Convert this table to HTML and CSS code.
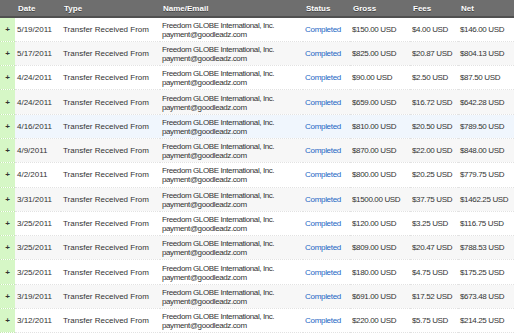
FILE: index.html
```html
<!DOCTYPE html>
<html lang="en">
<head>
  <meta charset="UTF-8" />
  <title>Transactions</title>
  <link rel="stylesheet" href="styles.css">
</head>
<body>
  <table class="history">
    <colgroup>
      <col class="c-toggle">
      <col class="c-date">
      <col class="c-type">
      <col class="c-name">
      <col class="c-status">
      <col class="c-gross">
      <col class="c-fees">
      <col class="c-net">
    </colgroup>
    <thead>
      <tr>
        <th class="toggle"></th>
        <th>Date</th>
        <th>Type</th>
        <th>Name/Email</th>
        <th>Status</th>
        <th>Gross</th>
        <th>Fees</th>
        <th>Net</th>
      </tr>
    </thead>
    <tbody>
      <tr>
        <td class="toggle">+</td><td>5/19/2011</td><td>Transfer Received From</td>
        <td class="name">Freedom GLOBE International, Inc.<br>payment@goodleadz.com</td>
        <td><a href="#">Completed</a></td><td class="amt">$150.00 USD</td><td class="amt">$4.00 USD</td><td class="amt">$146.00 USD</td>
      </tr>
      <tr class="alt">
        <td class="toggle">+</td><td>5/17/2011</td><td>Transfer Received From</td>
        <td class="name">Freedom GLOBE International, Inc.<br>payment@goodleadz.com</td>
        <td><a href="#">Completed</a></td><td class="amt">$825.00 USD</td><td class="amt">$20.87 USD</td><td class="amt">$804.13 USD</td>
      </tr>
      <tr>
        <td class="toggle">+</td><td>4/24/2011</td><td>Transfer Received From</td>
        <td class="name">Freedom GLOBE International, Inc.<br>payment@goodleadz.com</td>
        <td><a href="#">Completed</a></td><td class="amt">$90.00 USD</td><td class="amt">$2.50 USD</td><td class="amt">$87.50 USD</td>
      </tr>
      <tr class="alt">
        <td class="toggle">+</td><td>4/24/2011</td><td>Transfer Received From</td>
        <td class="name">Freedom GLOBE International, Inc.<br>payment@goodleadz.com</td>
        <td><a href="#">Completed</a></td><td class="amt">$659.00 USD</td><td class="amt">$16.72 USD</td><td class="amt">$642.28 USD</td>
      </tr>
      <tr class="hover">
        <td class="toggle">+</td><td>4/16/2011</td><td>Transfer Received From</td>
        <td class="name">Freedom GLOBE International, Inc.<br>payment@goodleadz.com</td>
        <td><a href="#">Completed</a></td><td class="amt">$810.00 USD</td><td class="amt">$20.50 USD</td><td class="amt">$789.50 USD</td>
      </tr>
      <tr class="alt">
        <td class="toggle">+</td><td>4/9/2011</td><td>Transfer Received From</td>
        <td class="name">Freedom GLOBE International, Inc.<br>payment@goodleadz.com</td>
        <td><a href="#">Completed</a></td><td class="amt">$870.00 USD</td><td class="amt">$22.00 USD</td><td class="amt">$848.00 USD</td>
      </tr>
      <tr>
        <td class="toggle">+</td><td>4/2/2011</td><td>Transfer Received From</td>
        <td class="name">Freedom GLOBE International, Inc.<br>payment@goodleadz.com</td>
        <td><a href="#">Completed</a></td><td class="amt">$800.00 USD</td><td class="amt">$20.25 USD</td><td class="amt">$779.75 USD</td>
      </tr>
      <tr class="alt">
        <td class="toggle">+</td><td>3/31/2011</td><td>Transfer Received From</td>
        <td class="name">Freedom GLOBE International, Inc.<br>payment@goodleadz.com</td>
        <td><a href="#">Completed</a></td><td class="amt">$1500.00 USD</td><td class="amt">$37.75 USD</td><td class="amt">$1462.25 USD</td>
      </tr>
      <tr>
        <td class="toggle">+</td><td>3/25/2011</td><td>Transfer Received From</td>
        <td class="name">Freedom GLOBE International, Inc.<br>payment@goodleadz.com</td>
        <td><a href="#">Completed</a></td><td class="amt">$120.00 USD</td><td class="amt">$3.25 USD</td><td class="amt">$116.75 USD</td>
      </tr>
      <tr class="alt">
        <td class="toggle">+</td><td>3/25/2011</td><td>Transfer Received From</td>
        <td class="name">Freedom GLOBE International, Inc.<br>payment@goodleadz.com</td>
        <td><a href="#">Completed</a></td><td class="amt">$809.00 USD</td><td class="amt">$20.47 USD</td><td class="amt">$788.53 USD</td>
      </tr>
      <tr>
        <td class="toggle">+</td><td>3/25/2011</td><td>Transfer Received From</td>
        <td class="name">Freedom GLOBE International, Inc.<br>payment@goodleadz.com</td>
        <td><a href="#">Completed</a></td><td class="amt">$180.00 USD</td><td class="amt">$4.75 USD</td><td class="amt">$175.25 USD</td>
      </tr>
      <tr class="alt">
        <td class="toggle">+</td><td>3/19/2011</td><td>Transfer Received From</td>
        <td class="name">Freedom GLOBE International, Inc.<br>payment@goodleadz.com</td>
        <td><a href="#">Completed</a></td><td class="amt">$691.00 USD</td><td class="amt">$17.52 USD</td><td class="amt">$673.48 USD</td>
      </tr>
      <tr>
        <td class="toggle">+</td><td>3/12/2011</td><td>Transfer Received From</td>
        <td class="name">Freedom GLOBE International, Inc.<br>payment@goodleadz.com</td>
        <td><a href="#">Completed</a></td><td class="amt">$220.00 USD</td><td class="amt">$5.75 USD</td><td class="amt">$214.25 USD</td>
      </tr>
    </tbody>
  </table>
</body>
</html>
```

FILE: styles.css
```css
* {
  box-sizing: border-box;
}
body {
  margin: 0;
  background: #fff;
  font-family: "Liberation Sans", Arial, sans-serif;
  font-size: 8px;
  color: #333;
  overflow: hidden;
}
.history {
  width: 514px;
  border-collapse: collapse;
  table-layout: fixed;
}
.c-toggle { width: 15px; }
.c-date { width: 46px; }
.c-type { width: 99px; }
.c-name { width: 143px; }
.c-status { width: 47px; }
.c-gross { width: 60px; }
.c-fees { width: 48px; }
.c-net { width: 56px; }

.history th {
  height: 17px;
  padding: 1px 0 0 3px;
  background: #6e6e6e;
  border-bottom: 2px solid #505050;
  color: #fff;
  font-weight: bold;
  text-align: left;
  text-shadow: 0 1px 0 #444;
}
.history td {
  height: 24.3px;
  padding: 0 0 0 2px;
  line-height: 9px;
  border-bottom: 1px dotted #e2e2e2;
  white-space: nowrap;
  overflow: hidden;
}
.history tr.alt td {
  background: #f7f7f7;
}
.history tr.hover td {
  background: #f0f6fd;
}
/* Зелёная колонка с плюсом */
.history .toggle,
.history tr td.toggle {
  padding: 0;
  text-align: center;
  background: #d6f7c6;
  border-bottom: 1px dotted #c4eab0;
  font-weight: bold;
  color: #333;
}
.history th.toggle {
  background: #6e6e6e;
  border-bottom: 2px solid #505050;
}
.history td.name {
  padding-top: 1px;
  letter-spacing: -0.4px;
}
.history td.amt {
  letter-spacing: -0.35px;
}
.history a {
  color: #2266c4;
  text-decoration: none;
  letter-spacing: -0.3px;
}
```
